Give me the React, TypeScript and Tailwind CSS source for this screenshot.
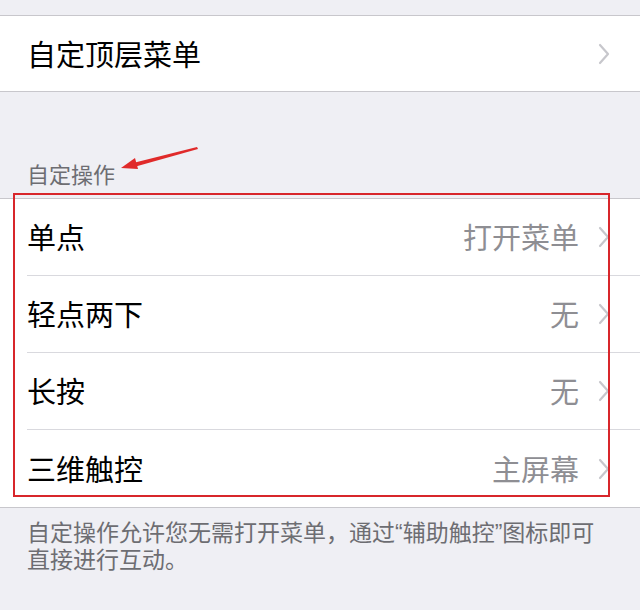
import React from "react";

const font = { fontFamily: '"Noto Sans CJK SC", "Noto Sans", sans-serif' };
const noteFont = { fontFamily: '"Liberation Sans", "Noto Sans CJK SC", sans-serif' };

function Chevron() {
  return (
    <svg width="12" height="22" viewBox="0 0 12 22" className="shrink-0">
      <polyline points="2,2 10,11 2,20" fill="none" stroke="#c7c7cc" strokeWidth="2.2" strokeLinecap="round" strokeLinejoin="round" />
    </svg>
  );
}

const actions = [
  { label: "单点", value: "打开菜单" },
  { label: "轻点两下", value: "无" },
  { label: "长按", value: "无" },
  { label: "三维触控", value: "主屏幕" },
];

export default function App() {
  return (
    <div className="relative w-[640px] h-[610px] overflow-hidden bg-[#efeff4]" style={font}>
      <div className="h-[15px]" />
      <div className="flex items-center h-[77px] bg-white border-y border-[#c8c7cc] pl-[27px] pr-[30px]">
        <span className="flex-1 text-[29px] text-black">自定顶层菜单</span>
        <Chevron />
      </div>
      <div className="h-[106px] flex items-end pl-[27px] pb-[8px]">
        <span className="text-[22px] text-[#6d6d72]">自定操作</span>
      </div>
      <div className="bg-white border-y border-[#c8c7cc]">
        {actions.map((a, i) => (
          <div key={a.label} className="pl-[27px]">
            <div
              className={`flex items-center h-[77px] pr-[30px] ${i < actions.length - 1 ? "border-b border-[#d9d9de]" : ""}`}
            >
              <span className="flex-1 text-[29px] text-black">{a.label}</span>
              <span className="text-[29px] text-[#8e8e93] mr-[19px]">{a.value}</span>
              <Chevron />
            </div>
          </div>
        ))}
      </div>
      <div className="pl-[27px] pr-[10px] pt-[12px] text-[23px] leading-[27px] text-[#6d6d72]" style={noteFont}>
        <p>自定操作允许您无需打开菜单，通过“辅助触控”图标即可</p>
        <p>直接进行互动。</p>
      </div>

      {/* annotation overlays */}
      <div className="absolute left-[13px] top-[193px] w-[597px] h-[304px] border-2 border-[#d8262b]" />
      <svg className="absolute left-0 top-0" width="640" height="610">
        <polygon points="197,147 133,163 134,167 198,149" fill="#e02a2a" />
        <polygon points="121,168 135,158 138,169" fill="#e02a2a" />
      </svg>
    </div>
  );
}
